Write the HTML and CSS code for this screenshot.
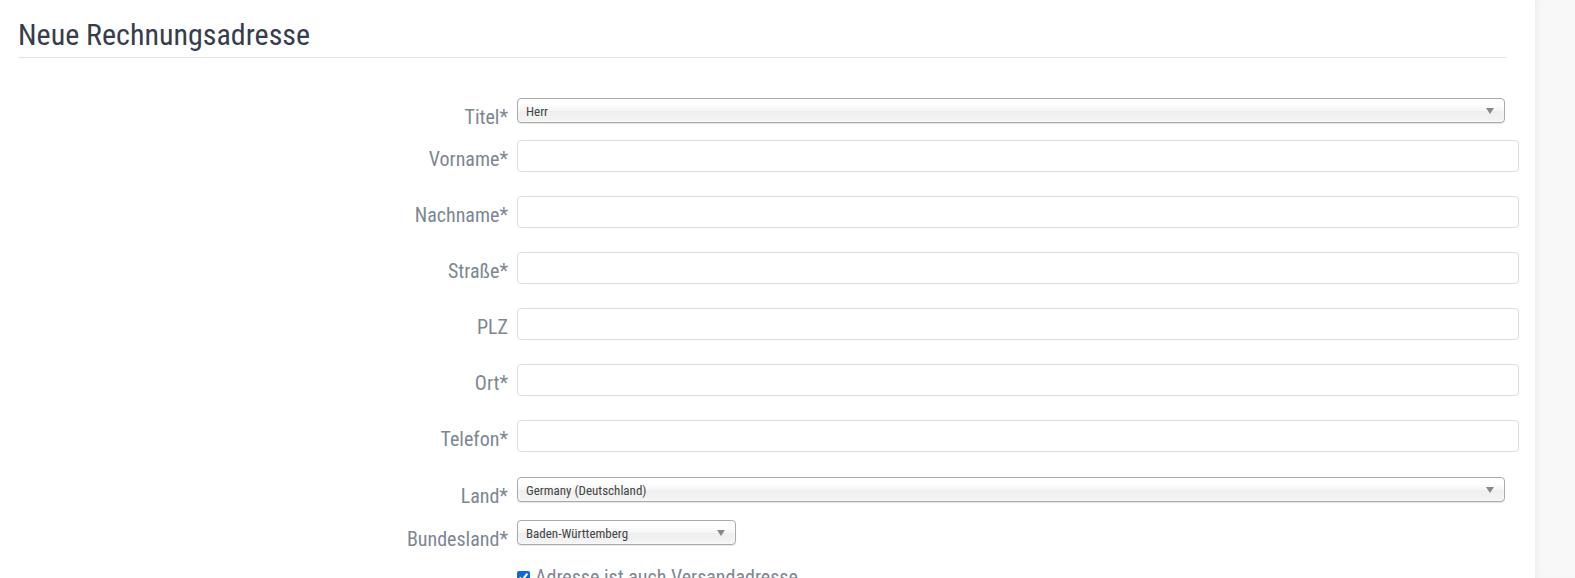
FILE: index.html
```html
<!DOCTYPE html>
<html lang="de">
<head>
<meta charset="utf-8">
<title>Neue Rechnungsadresse</title>
<link rel="stylesheet" href="styles.css">
</head>
<body>
<div class="page">
  <main class="content">
    <h1 class="page-title">Neue Rechnungsadresse</h1>
    <hr class="divider">
    <form class="address-form">
      <div class="form-row row-select">
        <label class="field-label">Titel*</label>
        <div class="chosen wide"><span class="chosen-text">Herr</span><span class="chosen-arrow"></span></div>
      </div>
      <div class="form-row">
        <label class="field-label" for="vorname">Vorname*</label>
        <input class="text-input" id="vorname" type="text">
      </div>
      <div class="form-row">
        <label class="field-label" for="nachname">Nachname*</label>
        <input class="text-input" id="nachname" type="text">
      </div>
      <div class="form-row">
        <label class="field-label" for="strasse">Straße*</label>
        <input class="text-input" id="strasse" type="text">
      </div>
      <div class="form-row">
        <label class="field-label" for="plz">PLZ</label>
        <input class="text-input" id="plz" type="text">
      </div>
      <div class="form-row">
        <label class="field-label" for="ort">Ort*</label>
        <input class="text-input" id="ort" type="text">
      </div>
      <div class="form-row row-last-input">
        <label class="field-label" for="telefon">Telefon*</label>
        <input class="text-input" id="telefon" type="text">
      </div>
      <div class="form-row row-select row-land">
        <label class="field-label">Land*</label>
        <div class="chosen wide"><span class="chosen-text">Germany (Deutschland)</span><span class="chosen-arrow"></span></div>
      </div>
      <div class="form-row row-select row-state">
        <label class="field-label">Bundesland*</label>
        <div class="chosen narrow"><span class="chosen-text">Baden-Württemberg</span><span class="chosen-arrow"></span></div>
      </div>
      <div class="form-row row-check">
        <span class="field-label"></span>
        <label class="check-label"><input class="check-box" type="checkbox" checked> Adresse ist auch Versandadresse</label>
      </div>
    </form>
  </main>
  <aside class="side-panel"></aside>
</div>
</body>
</html>
```
FILE: styles.css
```css
html, body {
  margin: 0;
  padding: 0;
  background: #fff;
  font-family: "Roboto Condensed", Roboto, "Liberation Sans", sans-serif;
}

.page {
  display: flex;
  height: 578px;
  overflow: hidden;
}

.content {
  flex: 1;
  padding: 0 0 0 18px;
}

.side-panel {
  width: 40px;
  background: #f8f8f8;
  box-shadow: inset 6px 0 6px -4px rgba(0, 0, 0, 0.05);
}

.page-title {
  margin: 18px 0 0;
  font-size: 30px;
  font-weight: 400;
  line-height: 33px;
  color: #363d4c;
}

.divider {
  width: 1488px;
  margin: 6px 0 0;
  border: 0;
  border-top: 1px solid #e3e3e3;
}

.address-form {
  margin-top: 40px;
}

.form-row {
  display: grid;
  grid-template-columns: 490px 1002px;
  column-gap: 9px;
  align-items: start;
  margin-bottom: 24px;
}

.row-last-input {
  margin-bottom: 25px;
}

.row-select {
  margin-bottom: 11px;
}

.row-land {
  margin-bottom: 12px;
}

.row-state {
  margin-bottom: 14px;
}

.field-label {
  text-align: right;
  font-size: 20px;
  line-height: 24px;
  padding-top: 7px;
  color: #7d8792;
}

.text-input {
  box-sizing: border-box;
  height: 32px;
  margin: 0;
  border: 1px solid #dcdcdc;
  border-radius: 4px;
  background: #fff;
  font: inherit;
}

.chosen {
  box-sizing: border-box;
  position: relative;
  height: 25px;
  padding: 0 8px;
  border: 1px solid #aaa;
  border-radius: 4px;
  background: linear-gradient(#fff 20%, #f6f6f6 50%, #eee 52%, #f4f4f4 100%);
  box-shadow: inset 0 0 3px #fff, 0 1px 1px rgba(0, 0, 0, 0.1);
  font-size: 13px;
  line-height: 25px;
  color: #444;
}

.chosen.wide {
  width: 988px;
}

.chosen.narrow {
  width: 219px;
}

/* dropdown triangle */
.chosen-arrow {
  position: absolute;
  right: 10px;
  top: 9px;
  width: 0;
  height: 0;
  border-left: 4px solid transparent;
  border-right: 4px solid transparent;
  border-top: 6px solid #888;
}

.row-check {
  margin-bottom: 0;
}

.check-label {
  display: flex;
  align-items: center;
  gap: 5px;
  font-size: 20px;
  line-height: 24px;
  padding-top: 0;
  color: #7d8792;
}

.check-box {
  margin: 0;
  width: 13px;
  height: 13px;
  accent-color: #0b6bd6;
}
```
